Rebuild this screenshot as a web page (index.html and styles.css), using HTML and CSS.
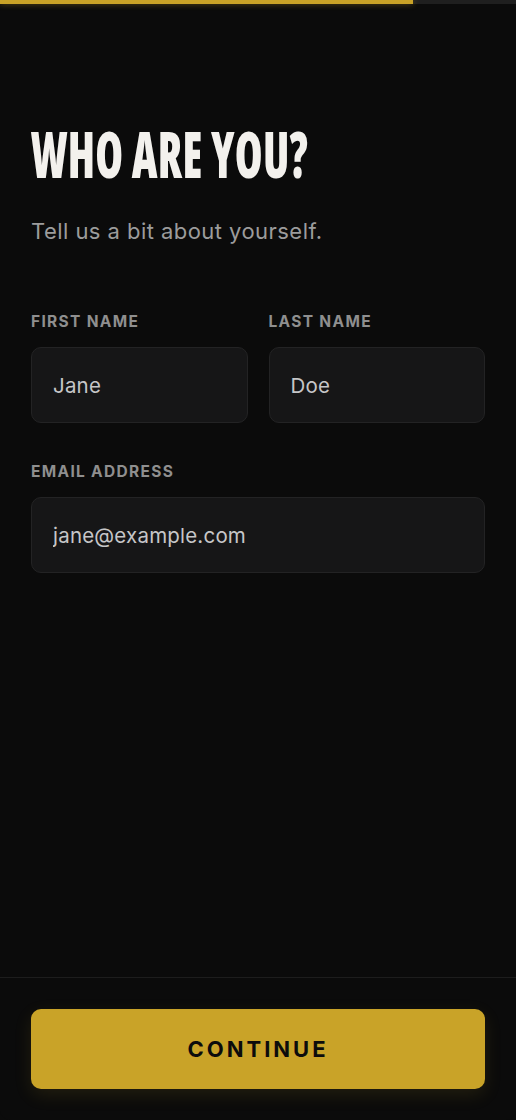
FILE: index.html
```html
<!DOCTYPE html>
<html lang="en">
<head>
<meta charset="utf-8">
<title>Who are you?</title>
<link rel="stylesheet" href="styles.css">
</head>
<body>
<div class="screen">
  <div class="progress"><div class="progress-fill" style="width:80%"></div></div>
  <main class="content">
    <h1 class="title"><span class="title-text">WHO ARE YOU?</span></h1>
    <p class="subtitle">Tell us a bit about yourself.</p>
    <form class="form">
      <div class="row">
        <label class="field">
          <span class="label">FIRST NAME</span>
          <input class="input" type="text" value="Jane">
        </label>
        <label class="field">
          <span class="label">LAST NAME</span>
          <input class="input" type="text" value="Doe">
        </label>
      </div>
      <label class="field">
        <span class="label">EMAIL ADDRESS</span>
        <input class="input" type="email" value="jane@example.com">
      </label>
    </form>
  </main>
  <footer class="footer">
    <button class="button" type="button">CONTINUE</button>
  </footer>
</div>
</body>
</html>
```
FILE: styles.css
```css
* { box-sizing: border-box; }
html, body { margin: 0; padding: 0; background: #0b0b0b; }
body { font-family: Inter, "Noto Sans", sans-serif; }

.screen {
  width: 516px;
  height: 1120px;
  display: flex;
  flex-direction: column;
  background: #0b0b0b;
  border-radius: 0 0 10px 10px;
  overflow: hidden;
}

.progress {
  height: 4px;
  background: #1f1f1f;
  flex: none;
}
.progress-fill {
  height: 100%;
  background: #c9a227;
  box-shadow: 0 0 6px rgba(201, 162, 39, 0.45);
}

.content {
  flex: 1;
  padding: 0 31px;
}

.title {
  margin: 118px 0 0;
  height: 63px;
  font-family: "Open Sans", sans-serif;
  font-stretch: 75%;
  font-weight: 800;
  font-size: 64px;
  line-height: 63px;
  color: #f3f1ed;
  white-space: nowrap;
}
.title-text {
  display: inline-block;
  letter-spacing: 0.5px;
  transform: scaleX(0.7);
  transform-origin: left center;
}

.subtitle {
  margin: 32px 0 0;
  font-size: 22px;
  line-height: 28px;
  letter-spacing: 0.45px;
  color: #9c9c9c;
}

.form {
  margin-top: 67px;
  display: flex;
  flex-direction: column;
  gap: 39px;
}
.row {
  display: grid;
  grid-template-columns: 1fr 1fr;
  gap: 21px;
}
.field {
  display: flex;
  flex-direction: column;
  gap: 15px;
}
.label {
  font-size: 15.5px;
  line-height: 20px;
  font-weight: 700;
  letter-spacing: 0.085em;
  color: #8f8f8f;
}
.input {
  width: 100%;
  height: 76px;
  padding: 0 21px;
  background: #161617;
  border: 1px solid #232324;
  border-radius: 10px;
  font-family: Inter, "Noto Sans", sans-serif;
  font-size: 20.5px;
  letter-spacing: 0.2px;
  color: #c6c6c8;
  outline: none;
}

.footer {
  flex: none;
  border-top: 1px solid #1d1d1d;
  padding: 31px 31px 31px;
}
.button {
  display: block;
  width: 100%;
  height: 80px;
  border: none;
  border-radius: 10px;
  background: #c9a328;
  box-shadow: 0 6px 18px rgba(201, 163, 40, 0.12);
  font-family: Inter, "Noto Sans", sans-serif;
  font-size: 22px;
  font-weight: 700;
  letter-spacing: 3px;
  color: #0c0c0c;
  cursor: pointer;
}
```
